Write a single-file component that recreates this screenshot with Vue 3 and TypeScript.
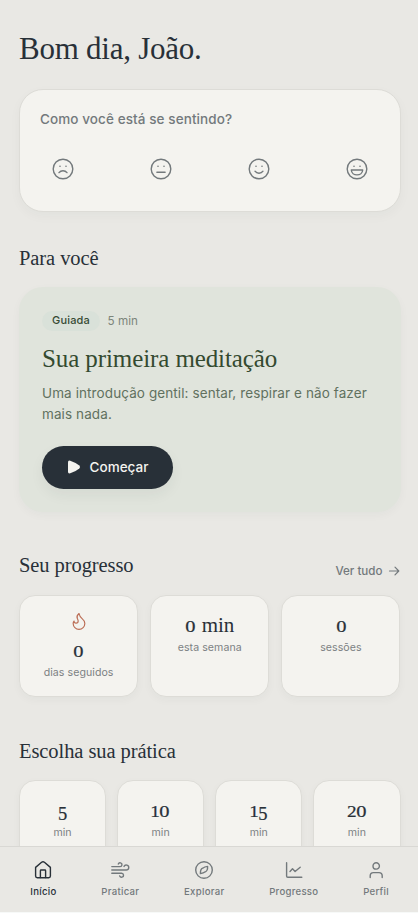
<script setup lang="ts">
interface Stat { value: string; unit?: string; label: string; flame?: boolean }
interface Tab { id: string; label: string; paths: string[] }

const moods: { id: string; mouth: string }[] = [
  { id: 'sad', mouth: 'M9 16.6C11 14.1 15 14.1 17 16.6' },
  { id: 'neutral', mouth: 'M8.9 16.2H17.1' },
  { id: 'good', mouth: 'M9 15.2C10.9 17.9 15.1 17.9 17 15.2' },
  { id: 'great', mouth: 'M7.3 14H18.7C18.4 20.5 7.6 20.5 7.3 14Z' },
]

const stats: Stat[] = [
  { value: '0', label: 'dias seguidos', flame: true },
  { value: '0', unit: 'min', label: 'esta semana' },
  { value: '0', label: 'sessões' },
]

const durations: string[] = ['5', '10', '15', '20']

const tabs: Tab[] = [
  { id: 'home', label: 'Início', paths: ['M4.6 9.4 10.6 4.3Q12 3.2 13.4 4.3L19.4 9.4V18Q19.4 19.7 17.7 19.7H6.3Q4.6 19.7 4.6 18Z', 'M9.4 19.5V12.7Q9.4 12 10.1 12H13.9Q14.6 12 14.6 12.7V19.5'] },
  { id: 'practice', label: 'Praticar', paths: ['M3.8 8.6H12A1.9 1.9 0 1 0 10.3 6', 'M3.8 12H18.3A2.5 2.5 0 1 0 16 8.4', 'M3.8 15.2H13.6A2 2 0 1 1 11.7 18'] },
  { id: 'explore', label: 'Explorar', paths: ['M20.3 12A8.3 8.3 0 1 1 3.7 12A8.3 8.3 0 1 1 20.3 12Z', 'M15.6 8.4Q15.8 13 13.3 13.8 11.5 15.3 8.4 15.6 8.3 11.2 10.7 10.2 12.5 8.7 15.6 8.4Z'] },
  { id: 'progress', label: 'Progresso', paths: ['M4.6 4.7V18.1Q4.6 19.3 5.8 19.3H19.8', 'M8 13.4 10.5 10.7 13.1 13.5 18.2 9.2'] },
  { id: 'profile', label: 'Perfil', paths: ['M15.4 7.9A3.2 3.2 0 1 1 9 7.9A3.2 3.2 0 1 1 15.4 7.9Z', 'M6.2 19.6V17.8Q6.2 14.6 9.4 14.6H15Q18.2 14.6 18.2 17.8V19.6'] },
]
</script>

<template>
  <div class="screen">
    <main class="content">
      <h1 class="greeting">Bom dia, João.</h1>

      <section class="mood">
        <p class="question">Como você está se sentindo?</p>
        <div class="faces">
          <button v-for="m in moods" :key="m.id" class="face">
            <svg width="26" height="26" viewBox="0 0 26 26">
              <circle cx="13" cy="13" r="9.8" />
              <circle class="eye" cx="10" cy="10.2" r=".8" />
              <circle class="eye" cx="16" cy="10.2" r=".8" />
              <path :d="m.mouth" />
            </svg>
          </button>
        </div>
      </section>

      <h2 class="heading for-you">Para você</h2>
      <section class="feature">
        <div class="meta"><span class="badge">Guiada</span><span class="time">5 min</span></div>
        <h3 class="title">Sua primeira meditação</h3>
        <p class="desc">Uma introdução gentil: sentar, respirar e não fazer mais nada.</p>
        <button class="start">
          <svg width="14" height="14" viewBox="0 0 14 14"><path d="M1 2.3Q1 0 3.2.7Q8.5 2.4 12.3 5.6Q13.9 7 12.3 8.4Q8.5 11.6 3.2 13.3Q1 14 1 11.7Z" /></svg>
          Começar
        </button>
      </section>

      <div class="row-head">
        <h2 class="heading">Seu progresso</h2>
        <a class="more">Ver tudo
          <svg width="12" height="12" viewBox="0 0 12 12"><path d="M1.5 6H10.8M7 2.2 10.8 6 7 9.8" /></svg>
        </a>
      </div>
      <section class="stats">
        <div v-for="s in stats" :key="s.label" class="card stat">
          <svg v-if="s.flame" class="flame" width="20" height="20" viewBox="0 0 24 24">
            <path d="M8.5 14.5A2.5 2.5 0 0 0 11 12c0-1.38-.5-2-1-3-1.072-2.143-.224-4.054 2-6 .5 2.5 2 4.9 4 6.5 2 1.6 3 3.5 3 5.5a7 7 0 1 1-14 0c0-1.153.433-2.294 1-3a2.5 2.5 0 0 0 2.5 2.5z" />
          </svg>
          <div class="value"><span class="digit d0">{{ s.value }}</span><span v-if="s.unit" class="unit">{{ s.unit }}</span></div>
          <div class="label">{{ s.label }}</div>
        </div>
      </section>

      <h2 class="heading choose">Escolha sua prática</h2>
      <section class="durations">
        <div v-for="d in durations" :key="d" class="card duration">
          <div class="value"><span v-for="(c, i) in d" :key="i" class="digit" :class="'d' + c">{{ c }}</span></div>
          <div class="label">min</div>
        </div>
      </section>
    </main>

    <nav class="tabs">
      <a v-for="(t, i) in tabs" :key="t.id" class="tab" :class="{ active: i === 0 }">
        <svg width="24" height="24" viewBox="0 0 24 24"><path v-for="p in t.paths" :key="p" :d="p" /></svg>
        <span>{{ t.label }}</span>
      </a>
    </nav>
  </div>
</template>

<style>
body { background: #f7f9f8; overflow: hidden; }
</style>

<style scoped>
* { box-sizing: border-box; margin: 0; }
.screen { width: 418px; height: 912px; display: flex; flex-direction: column; overflow: hidden; background: #e9e8e4; font-family: Inter, sans-serif; color: #283038; }
.content { flex: 1; min-height: 0; overflow: hidden; padding: 29px 17.5px 0 19px; }
svg { display: block; flex: none; fill: none; stroke: currentColor; stroke-width: 1.4; stroke-linecap: round; stroke-linejoin: round; }
button { border: 0; padding: 0; font: inherit; }
h1, h2, h3, .value { font-family: Georgia, "Liberation Serif", serif; font-weight: 400; white-space: nowrap; }
.greeting { height: 60.4px; font-size: 31px; line-height: 40px; letter-spacing: -.25px; }
.mood { height: 123px; padding: 19px 20px; border: 1px solid #dddcd7; border-radius: 24px; background: #f4f3ef; box-shadow: 0 4px 12px rgba(40,48,56,.035); }
.question { font-size: 13.5px; line-height: 20px; font-weight: 500; letter-spacing: .09px; color: #73797c; }
.faces { display: flex; justify-content: space-between; margin-top: 26.4px; padding: 0 9.5px; }
.face { color: #73797c; background: none; }
.eye { fill: currentColor; stroke: none; }
.heading { font-size: 20.5px; line-height: 28px; letter-spacing: -.08px; }
.for-you { margin-top: 31.6px; }
.feature { height: 225px; margin-top: 15px; padding: 24px 23px; border-radius: 24px; background: #e0e4dc; box-shadow: 0 3px 10px rgba(40,48,56,.035); }
.meta { display: flex; align-items: center; gap: 7.5px; height: 20px; }
.badge { width: 58px; height: 20px; text-align: center; border-radius: 10px; background: #d9e1d9; color: #364a34; font-size: 11px; line-height: 19px; font-weight: 500; letter-spacing: .15px; }
.time { font-size: 11.7px; line-height: 18px; color: #7d857b; }
.title { margin-top: 11px; font-size: 25px; line-height: 34px; color: #344a30; letter-spacing: -.1px; }
.desc { margin-top: 7px; font-size: 13.5px; line-height: 21px; letter-spacing: .1px; color: #61715f; }
.start { display: flex; align-items: center; justify-content: center; gap: 9px; width: 131px; height: 43px; margin-top: 21px; border-radius: 22px; background: #283038; color: #f4f3ef; font-size: 13.5px; font-weight: 500; box-shadow: 0 6px 14px rgba(40,48,56,.06); }
.start svg { fill: currentColor; stroke: none; }
.row-head { display: flex; justify-content: space-between; align-items: flex-start; margin-top: 39px; height: 44px; }
.more { display: flex; align-items: center; gap: 5.5px; margin-top: 10px; padding-right: .5px; height: 20px; font-size: 11.6px; font-weight: 500; color: #73797c; }
.more svg { stroke-width: 1.2; }
.card { border: 1px solid #dddcd7; border-radius: 16px; background: #f4f3ef; box-shadow: 0 3px 9px rgba(40,48,56,.035); text-align: center; }
.stats { display: grid; grid-template-columns: repeat(3, 1fr); gap: 12px; }
.stat { height: 102px; padding-top: 15.5px; display: flex; flex-direction: column; align-items: center; }
.flame { color: #bb6d55; margin-bottom: 5px; }
.value { height: 28px; font-size: 21px; line-height: 28px; }
.unit { margin-left: 6px; }
.digit { display: inline-block; line-height: 1; text-align: center; font-size: 16px; transform: scaleX(1.28); width: 10.5px; -webkit-text-stroke: .2px currentColor; }
.d1 { width: 8px; transform: scaleX(1.2); }
.d2 { width: 9.5px; transform: scaleX(1.2); }
.d5 { font-size: 18.5px; width: 9.5px; transform: translateY(2.5px); }
.label { font-size: 10.6px; line-height: 16px; letter-spacing: .06px; color: #7c8183; }
.stat .label { margin-top: .8px; }
.choose { margin-top: 40px; }
.durations { display: grid; grid-template-columns: repeat(4, 1fr); gap: 11px; margin-top: 15px; }
.duration { height: 88px; padding-top: 15px; }
.duration .label { margin-top: .6px; }
.tabs { flex: none; height: 66px; border-top: 1px solid #d9d8d4; display: flex; justify-content: space-between; background: #e9e8e4; padding: 11px 29px 0 30.3px; }
.tab { display: flex; flex-direction: column; align-items: center; gap: 2px; color: #73797c; font-size: 9.6px; line-height: 15px; font-weight: 500; letter-spacing: .28px; }
.active { color: #283038; }
</style>
